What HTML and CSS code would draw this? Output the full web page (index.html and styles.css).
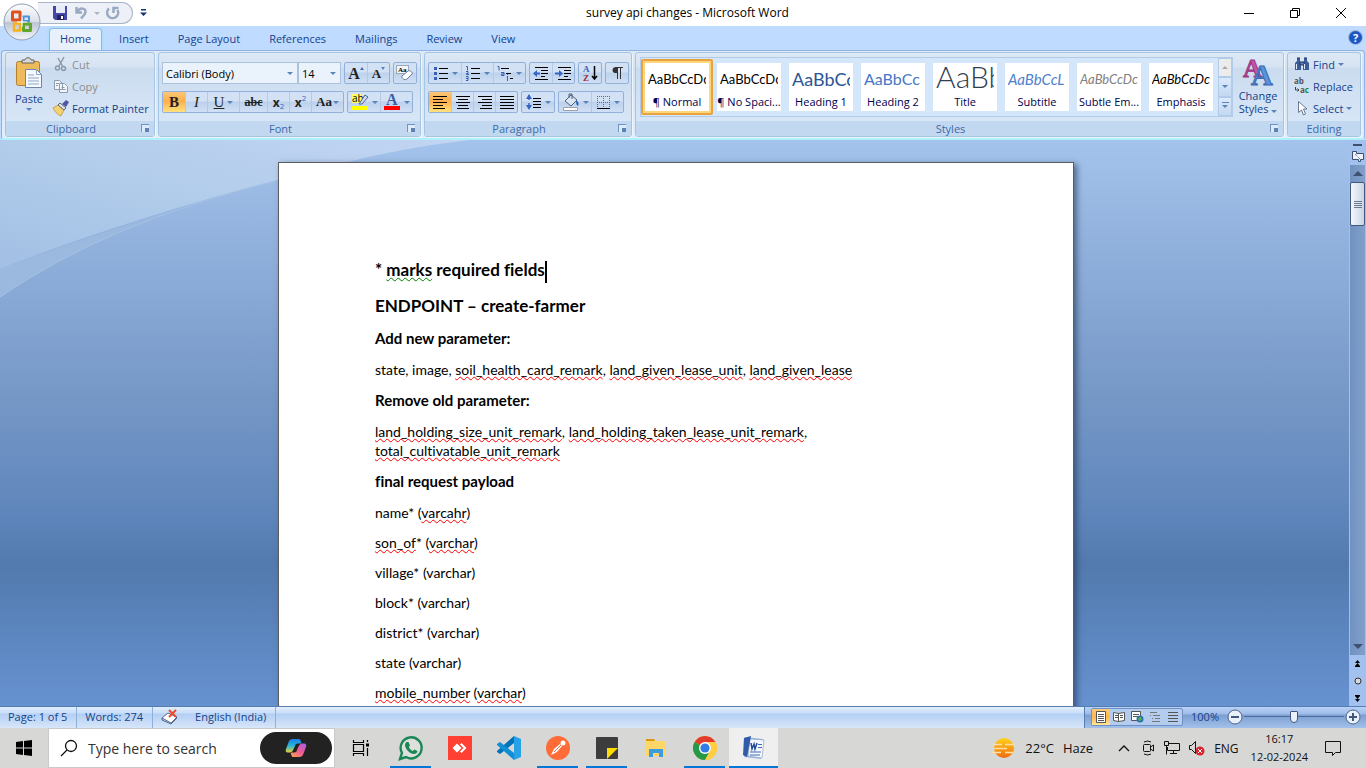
FILE: index.html
```html
<!DOCTYPE html>
<html lang="en">
<head>
    <meta charset="UTF-8">
    <title>survey api changes - Microsoft Word</title>
    <link rel="stylesheet" href="styles.css">
</head>
<body>
<header class="titlebar">
    <button class="office-btn" aria-label="Office Button">
        <svg width="38" height="38" viewBox="0 0 38 38">
            <defs>
                <linearGradient id="orb" x1="0" y1="0" x2="0" y2="1">
                    <stop offset="0" stop-color="#fdfdfe"/><stop offset=".48" stop-color="#dce1ea"/>
                    <stop offset=".52" stop-color="#bcc5d4"/><stop offset="1" stop-color="#f4f7fa"/>
                </linearGradient>
            </defs>
            <circle cx="19" cy="19" r="18" fill="url(#orb)" stroke="#8f9db3"/>
            <g fill="none" stroke-width="3" stroke-linejoin="round">
                <path d="M17 17H9.500V9H17z" stroke="#e2501a"/>
                <path d="M20.500 17.500v-4H26v4.500h-5.500z" stroke="#4d94dc" stroke-width="2"/>
                <path d="M17 20.500v7h-6v-7z" stroke="#f5b21a" stroke-width="2.500"/>
                <path d="M20.500 21h7v6.500h-7z" stroke="#62a52c"/>
            </g>
            <path d="M14 19h10M19 14v10" stroke="#fff" stroke-width="1"/>
        </svg>
    </button>
    <div class="quick-access">
        <button aria-label="Save">
            <svg width="16" height="16" viewBox="0 0 16 16"><path d="M1 1h14v14H3l-2-2z" fill="#4646a8"/><path d="M4 1h9v7H4z" fill="#e6ecfa"/><path d="M5 10h7v5H5z" fill="#23235e"/><path d="M9 11h2v3H9z" fill="#fff"/></svg>
        </button>
        <button aria-label="Undo">
            <svg width="16" height="16" viewBox="0 0 16 16"><path d="M3.500 2v5.500H9M4 7c3-5 9-4 8.500 0-.5 3-2 4-4.500 6.500" fill="none" stroke="#9aa9c2" stroke-width="2.500"/></svg>
        </button>
        <i class="arrow grey"></i>
        <button aria-label="Repeat">
            <svg width="16" height="16" viewBox="0 0 16 16"><path d="M4 3.500A5.500 5.500 0 1 0 12.500 5M8.500 8V3h5" fill="none" stroke="#9aa9c2" stroke-width="2.500"/></svg>
        </button>
    </div>
    <button class="customize" aria-label="Customize Quick Access Toolbar">
        <svg width="7" height="8" viewBox="0 0 7 8"><path d="M1 0h5v1.500H1zM0 3.500h7L3.500 7z" fill="#15327c"/></svg>
    </button>
    <h1>survey api changes - Microsoft Word</h1>
    <div class="window-controls">
        <button aria-label="Minimize"><svg width="12" height="12"><path d="M1 6.500h10" stroke="#000"/></svg></button>
        <button aria-label="Restore"><svg width="12" height="12"><path d="M1.500 3.500h7v7h-7zM3.500 3V1.500h7v7H9" fill="none" stroke="#000"/></svg></button>
        <button aria-label="Close"><svg width="12" height="12"><path d="M1 1l10 10M11 1L1 11" stroke="#000"/></svg></button>
    </div>
</header>

<nav class="tabs">
    <a class="active" href="#">Home</a>
    <a href="#">Insert</a>
    <a href="#">Page Layout</a>
    <a href="#">References</a>
    <a href="#">Mailings</a>
    <a href="#">Review</a>
    <a href="#">View</a>
    <button class="help" aria-label="Help">?</button>
</nav>

<section class="ribbon">
    <div class="group clipboard">
        <div class="group-body">
            <button class="big-btn">
                <svg width="28" height="32" viewBox="0 0 28 32">
                    <rect x="1.500" y="4.500" width="23" height="24" rx="2" fill="#edba5c" stroke="#b57f2e"/>
                    <path d="M7 6V3h3c0-3 6-3 6 0h3v3z" fill="#d9d9d9" stroke="#69655d"/>
                    <path d="M10.500 12.500h11l5 5v13h-16z" fill="#f6f9fe" stroke="#6d85ab"/>
                    <path d="M21.500 12.500v5h5M13 18h6m-6 3h11m-11 3h11m-11 3h11" fill="none" stroke="#8fa5c8"/>
                </svg>
                <span>Paste</span>
                <i class="arrow"></i>
            </button>
            <div class="stack">
                <button class="disabled">
                    <svg width="16" height="16" viewBox="0 0 16 16" fill="none" stroke="#8d98a8" stroke-width="1.500"><path d="M5 2l5 9M11 1L6 10"/><circle cx="4.500" cy="12" r="2"/><circle cx="10.500" cy="12.500" r="2"/></svg>
                    Cut
                </button>
                <button class="disabled">
                    <svg width="16" height="16" viewBox="0 0 16 16" fill="#f1f4f9" stroke="#8e9cb2"><path d="M1.500 2.500h5l3 3v6h-8zM6.500 5.500h5l3 3v6h-8z"/><path d="M8.500 9.500h3m-3 2h4M3 5.500h3m-3 2h2"/></svg>
                    Copy
                </button>
                <button>
                    <svg width="16" height="16" viewBox="0 0 16 16"><path d="M0 8l5-3 6 5-3 6c-3-1-6-4-8-8z" fill="#f4d272" stroke="#b78c32" stroke-width=".7"/><path d="M5 5l2-2 6 5-2 2z" fill="#dfe3eb" stroke="#5b6577"/><path d="M9 4l4-4 3 2-3 5z" fill="#5554a4"/></svg>
                    Format Painter
                </button>
            </div>
        </div>
        <div class="group-name with-launcher">Clipboard <button class="launcher" aria-label="Clipboard options"></button></div>
    </div>

    <div class="group font">
        <div class="group-body rows">
            <div class="row">
                <div class="combos">
                    <label class="combo font-name"><select aria-label="Font"><option>Calibri (Body)</option></select><i class="arrow"></i></label>
                    <label class="combo font-size"><select aria-label="Font size"><option>14</option></select><i class="arrow"></i></label>
                </div>
                <div class="btn-set">
                    <button class="serif grow" aria-label="Grow font">A<i class="up"></i></button>
                    <button class="serif shrink" aria-label="Shrink font">A<i class="arrow"></i></button>
                </div>
                <div class="btn-set">
                    <button aria-label="Clear formatting">
                        <svg width="18" height="18" viewBox="0 0 18 18"><rect x=".5" y="1.500" width="12" height="8" fill="#f4f6fb" stroke="#9aa6ba"/><text x="2" y="8" class="tiny">Aa</text><path d="M6 12l6-5c2-1 5 1 4 3l-5 5c-2 2-6-1-5-3z" fill="#fff" stroke="#6c7890"/></svg>
                    </button>
                </div>
            </div>
            <div class="row">
                <div class="btn-set">
                    <button class="serif pressed"><b>B</b></button>
                    <button class="serif"><em>I</em></button>
                    <button class="serif wide"><u>U</u><i class="arrow"></i></button>
                    <button class="serif small"><s>abc</s></button>
                    <button class="script" aria-label="Subscript"><b>x</b><sub>2</sub></button>
                    <button class="script" aria-label="Superscript"><b>x</b><sup>2</sup></button>
                    <button class="serif case">Aa<i class="arrow"></i></button>
                </div>
                <div class="btn-set">
                    <button class="wide" aria-label="Highlight colour">
                        <svg width="18" height="18" viewBox="0 0 18 18"><path d="M1 1h9v9H1z" fill="#ff6"/><text x="1" y="9" class="ab">ab</text><path d="M8 11l6-9 3 2-6 7z" fill="#cfdcf1" stroke="#4c6191"/><path d="M1 13h16v4H1z" fill="#ff0"/></svg>
                        <i class="arrow"></i>
                    </button>
                    <button class="wide" aria-label="Font colour">
                        <svg width="18" height="18" viewBox="0 0 18 18"><text x="3" y="12" class="colour-a">A</text><path d="M1 13h16v4H1z" fill="#f00"/></svg>
                        <i class="arrow"></i>
                    </button>
                </div>
            </div>
        </div>
        <div class="group-name with-launcher">Font <button class="launcher" aria-label="Font options"></button></div>
    </div>

    <div class="group paragraph">
        <div class="group-body rows">
            <div class="row">
                <div class="btn-set">
                    <button class="wide" aria-label="Bullets"><svg width="16" height="16"><path d="M6 3.500h9M6 8.500h9M6 13.500h9" stroke="#000"/><path d="M1 2h3v3H1zM1 7h3v3H1zM1 12h3v3H1z" fill="#3b5fb5"/></svg><i class="arrow"></i></button>
                    <button class="wide" aria-label="Numbering"><svg width="16" height="16"><path d="M6 3.500h9M6 8.500h9M6 13.500h9" stroke="#000"/><path d="M1 1.500h1.500v4M1 6.500h2v2H1.500v1H4M1 11.500h2v4H1m0-2h2" stroke="#3b5fb5" fill="none"/></svg><i class="arrow"></i></button>
                    <button class="wide" aria-label="Multilevel list"><svg width="16" height="16"><path d="M4 3.500h8M9 8.500h5M13 13.500h3" stroke="#000"/><path d="M.5 1.500H2v4M4 7.500h3v3H4.500V9H7M10.500 11v5m0-7v1" stroke="#3b5fb5" fill="none"/></svg><i class="arrow"></i></button>
                </div>
                <div class="btn-set">
                    <button aria-label="Decrease indent"><svg width="18" height="16"><path d="M3 2.500h13M9 5.500h7M9 8.500h7M9 11.500h4M3 14.500h13" stroke="#000"/><path d="M8 8.500H3" stroke="#3565c4" stroke-width="2"/><path d="M5 5v7L1 8.500z" fill="#3565c4"/></svg></button>
                    <button aria-label="Increase indent"><svg width="18" height="16"><path d="M3 2.500h13M9 5.500h7M9 8.500h7M9 11.500h4M3 14.500h13" stroke="#000"/><path d="M0 8.500h5" stroke="#3565c4" stroke-width="2"/><path d="M4 5v7l4-3.500z" fill="#3565c4"/></svg></button>
                </div>
                <div class="btn-set">
                    <button aria-label="Sort"><svg width="18" height="18"><text x="2" y="8" class="sort-a">A</text><text x="2" y="17" class="sort-z">Z</text><path d="M13.500 2v13M11 12l2.500 3 2.500-3" fill="none" stroke="#000" stroke-width="1.500"/></svg></button>
                </div>
                <div class="btn-set">
                    <button aria-label="Show paragraph marks"><svg width="16" height="16"><path d="M7 2.500h7M8.500 2v12M11.500 2v12" stroke="#333"/><path d="M8 2C2 1 2 9 8 8z" fill="#333"/></svg></button>
                </div>
            </div>
            <div class="row">
                <div class="btn-set">
                    <button class="pressed" aria-label="Align left"><svg width="16" height="16"><path d="M1 2.500h14M1 5.500h10M1 8.500h14M1 11.500h10M1 14.500h12" stroke="#000"/></svg></button>
                    <button aria-label="Centre"><svg width="16" height="16"><path d="M1 2.500h14M3 5.500h10M1 8.500h14M3 11.500h10M2 14.500h12" stroke="#000"/></svg></button>
                    <button aria-label="Align right"><svg width="16" height="16"><path d="M1 2.500h14M5 5.500h10M1 8.500h14M5 11.500h10M3 14.500h12" stroke="#000"/></svg></button>
                    <button aria-label="Justify"><svg width="16" height="16"><path d="M1 2.500h14M1 5.500h14M1 8.500h14M1 11.500h14M1 14.500h14" stroke="#000"/></svg></button>
                </div>
                <div class="btn-set">
                    <button class="wide" aria-label="Line spacing"><svg width="16" height="16"><path d="M7 4.500h8M7 7.500h8M7 10.500h8M7 13.500h8" stroke="#000"/><path d="M3 1v14" stroke="#3565c4" stroke-width="1.500" stroke-dasharray="5 3"/><path d="M0 5l3-5 3 5zM0 11l3 5 3-5z" fill="#3565c4"/></svg><i class="arrow"></i></button>
                </div>
                <div class="btn-set">
                    <button class="wide" aria-label="Shading"><svg width="18" height="18"><path d="M3 8l6-6 6 5-6 6z" fill="#dce5f3" stroke="#4b5d7e"/><path d="M7 5V1h3v5" fill="none" stroke="#4b5d7e"/><path d="M14 7c3 2 3 4 2 6-2-1-2-3-2-6z" fill="#2f62bb"/><path d="M1.500 14.500h14v3h-14z" fill="#fff" stroke="#a0a0a0"/></svg><i class="arrow"></i></button>
                    <button class="wide" aria-label="Borders"><svg width="16" height="16"><path d="M2.500 2v12M8.500 2v12M14.500 2v12M2 2.500h13M2 8.500h13" stroke="#5a6c8c" stroke-dasharray="1 1"/><path d="M2 14.500h13" stroke="#000"/></svg><i class="arrow"></i></button>
                </div>
            </div>
        </div>
        <div class="group-name with-launcher">Paragraph <button class="launcher" aria-label="Paragraph options"></button></div>
    </div>

    <div class="group styles">
        <div class="group-body">
            <div class="gallery">
                <div class="gallery-items">
                    <button class="style-item selected"><span class="sample">AaBbCcDc</span><span>¶ Normal</span></button>
                    <button class="style-item"><span class="sample">AaBbCcDc</span><span>¶ No Spaci...</span></button>
                    <button class="style-item"><span class="sample heading1">AaBbCc</span><span>Heading 1</span></button>
                    <button class="style-item"><span class="sample heading2">AaBbCc</span><span>Heading 2</span></button>
                    <button class="style-item"><span class="sample title">AaBb</span><span>Title</span></button>
                    <button class="style-item"><span class="sample subtitle">AaBbCcL</span><span>Subtitle</span></button>
                    <button class="style-item"><span class="sample subtle">AaBbCcDc</span><span>Subtle Em...</span></button>
                    <button class="style-item"><span class="sample emphasis">AaBbCcDc</span><span>Emphasis</span></button>
                </div>
                <div class="gallery-scroll">
                    <button class="off" aria-label="Previous styles"><i class="up"></i></button>
                    <button aria-label="Next styles"><i class="arrow"></i></button>
                    <button class="more" aria-label="More styles"><i class="arrow"></i></button>
                </div>
            </div>
            <button class="big-btn">
                <svg width="32" height="32" viewBox="0 0 32 32">
                    <text x="1" y="20" class="big-a pink">A</text>
                    <text x="9" y="28" class="big-a">A</text>
                </svg>
                <span>Change<br>Styles <i class="arrow"></i></span>
            </button>
        </div>
        <div class="group-name with-launcher">Styles <button class="launcher" aria-label="Styles options"></button></div>
    </div>

    <div class="group editing">
        <div class="group-body">
            <div class="stack">
                <button>
                    <svg width="16" height="16" viewBox="0 0 16 16"><path d="M3 2h3v3l1 2v7H1V7l2-2zM10 2h3v3l2 2v7H9V7l1-2z" fill="#3b5c96"/><path d="M6 6h4v3H6zM3 2h3m4 0h3" fill="#6584bb" stroke="#1f376b"/><path d="M2.500 8v5M10.500 8v5" stroke="#dfe9fa"/></svg>
                    Find <i class="arrow"></i>
                </button>
                <button>
                    <svg width="16" height="16" viewBox="0 0 16 16"><text x="0" y="6" class="rep">ab</text><text x="6" y="15" class="rep">a<tspan fill="#188a28">c</tspan></text><path d="M1.500 9v3H5M3.500 10.500L5 12l-1.500 1.500" fill="none" stroke="#345"/></svg>
                    Replace
                </button>
                <button>
                    <svg width="16" height="16" viewBox="0 0 16 16"><path d="M4.500 1.500v11l3-2.500 2 5 2-1-2-5h3.500z" fill="#fff" stroke="#6b7a94"/></svg>
                    Select <i class="arrow"></i>
                </button>
            </div>
        </div>
        <div class="group-name">Editing</div>
    </div>
</section>

<main class="workspace">
    <svg class="swoosh" width="470" height="170" viewBox="0 0 470 170">
        <defs>
            <linearGradient id="sky" x1="1" y1="0" x2="0" y2="1">
                <stop offset="0" stop-color="#c2d5f3"/><stop offset=".5" stop-color="#b2cdeb"/><stop offset="1" stop-color="#a2bfe4"/>
            </linearGradient>
        </defs>
        <path d="M0 157Q110 81 277 41Q120 84 0 129z" fill="#9bb9de"/>
        <path d="M0 0H470Q400 8 340 24Q150 70 0 129z" fill="url(#sky)"/>
        <path d="M0 157Q110 81 277 41" fill="none" stroke="#a6c1e4"/>
    </svg>
    <div class="canvas">
        <article class="page">
            <h2>* <span class="grammar">marks</span> required fields<span class="cursor"></span></h2>
            <h2>ENDPOINT – create-farmer</h2>
            <h3>Add new parameter:</h3>
            <p class="para">state, image, <span class="typo">soil_health_card_remark</span>, <span class="typo">land_given_lease_unit</span>, <span class="typo">land_given_lease</span></p>
            <h3>Remove old parameter:</h3>
            <p class="para"><span class="typo">land_holding_size_unit_remark</span>, <span class="typo">land_holding_taken_lease_unit_remark</span>, <span class="typo">total_cultivatable_unit_remark</span></p>
            <h3>final request payload</h3>
            <p>name* (<span class="typo">varcahr</span>)</p>
            <p><span class="typo">son_of</span>* (<span class="typo">varchar</span>)</p>
            <p>village* (varchar)</p>
            <p>block* (varchar)</p>
            <p>district* (varchar)</p>
            <p>state (varchar)</p>
            <p><span class="typo">mobile_number</span> (<span class="typo">varchar</span>)</p>
        </article>
    </div>
    <div class="scrollbar">
        <div class="split"></div>
        <button class="ruler" aria-label="View ruler"><svg width="12" height="12"><path d="M.5 1.500h4v2h7v6h-3v2h-2v-2h-6z" fill="#eef3fb" stroke="#3e4f70"/><path d="M3 4l5 5" stroke="#3e4f70" stroke-dasharray="1 1"/></svg></button>
        <button aria-label="Scroll up"><i class="up"></i></button>
        <div class="track"><div class="thumb"></div></div>
        <button aria-label="Scroll down"><i class="arrow"></i></button>
        <button class="browse" aria-label="Previous page"><svg width="7" height="8"><path d="M3.500 0L6 3H1zM3.500 3L6 6H1zM1 6h5v1H1z" fill="#000"/></svg></button>
        <button class="browse" aria-label="Select browse object"><svg width="8" height="8"><circle cx="4" cy="4" r="3" fill="#d8d8d8" stroke="#333"/></svg></button>
        <button class="browse" aria-label="Next page"><svg width="7" height="8"><path d="M1 1h5v1H1zM3.500 5L6 2H1zM3.500 8L6 5H1z" fill="#000"/></svg></button>
    </div>
</main>

<footer class="statusbar">
    <button>Page: 1 of 5</button>
    <button>Words: 274</button>
    <button class="proof" aria-label="Proofing errors">
        <svg width="18" height="16" viewBox="0 0 18 16"><path d="M1 9l6-5 9 4-6 6z" fill="#fff" stroke="#53698f"/><path d="M1 9v2l9 4 6-6" fill="none" stroke="#53698f"/><path d="M8 1l7 7M15 1L8 8" stroke="#f1492c" stroke-width="2"/></svg>
    </button>
    <button class="language">English (India)</button>
    <div class="status-right">
        <div class="views">
            <button class="on" aria-label="Print layout"><svg width="12" height="12"><path d="M1.500.5h9v11h-9z" fill="#fff" stroke="#555"/><path d="M3 3.500h6M3 5.500h6M3 7.500h6M3 9.500h6" stroke="#555"/></svg></button>
            <button aria-label="Full screen reading"><svg width="12" height="12"><path d="M.5 1.500l5 1 6-1v8l-6 1-5-1z" fill="#fff" stroke="#555"/><path d="M5.500 2v9M2 4.500h3M2 6.500h3M7 4.500h3M7 6.500h3" stroke="#555"/></svg></button>
            <button aria-label="Web layout"><svg width="13" height="12"><path d="M.5.5h9v9h-9z" fill="#fff" stroke="#555"/><path d="M2 3.500h6M2 5.500h6" stroke="#555"/><circle cx="9" cy="8" r="3.500" fill="#2874a8"/><path d="M7 7l3-1 1 3-3 1z" fill="#5aae52"/></svg></button>
            <button aria-label="Outline"><svg width="12" height="12"><path d="M1 1.500h7M4 4.500h7M6 7.500h5M3 10.500h8M1 4.500h1M3 7.500h1" stroke="#777"/></svg></button>
            <button aria-label="Draft"><svg width="12" height="12"><path d="M1 1.500h10M1 4.500h10M1 7.500h10M1 10.500h10" stroke="#555"/></svg></button>
        </div>
        <button class="percent">100%</button>
        <button class="round" aria-label="Zoom out"><svg width="16" height="16"><circle cx="8" cy="8" r="7" fill="#e9f0fa" stroke="#4b648d"/><path d="M4 8h8" stroke="#42577d" stroke-width="2"/></svg></button>
        <input type="range" min="0" max="100" value="50" aria-label="Zoom">
        <button class="round" aria-label="Zoom in"><svg width="16" height="16"><circle cx="8" cy="8" r="7" fill="#e9f0fa" stroke="#4b648d"/><path d="M4 8h8M8 4v8" stroke="#42577d" stroke-width="2"/></svg></button>
    </div>
</footer>

<div class="taskbar">
    <button class="start" aria-label="Start"><svg width="16" height="16"><path d="M0 2l7-1v6.500H0zM8 1l8-1v7.500H8zM0 8.500h7V15l-7-1zM8 8.500h8V16l-8-1z"/></svg></button>
    <div class="search">
        <svg width="18" height="18" viewBox="0 0 18 18"><circle cx="11" cy="7" r="5.500" fill="none" stroke="#111" stroke-width="1.300"/><path d="M7 11l-6 6" stroke="#111" stroke-width="1.300"/></svg>
        <input type="text" placeholder="Type here to search" aria-label="Search">
        <button class="copilot" aria-label="Copilot">
            <svg width="22" height="20" viewBox="0 0 24 22">
                <defs>
                    <linearGradient id="cp1" x1="0" y1="0" x2="0" y2="1"><stop offset="0" stop-color="#1a7ef0"/><stop offset=".5" stop-color="#28b4d6"/><stop offset="1" stop-color="#e8d333"/></linearGradient>
                    <linearGradient id="cp2" x1="1" y1="0" x2="0" y2="1"><stop offset="0" stop-color="#a25df2"/><stop offset=".5" stop-color="#ef5c92"/><stop offset="1" stop-color="#ffa84a"/></linearGradient>
                </defs>
                <path d="M8 1h7c2 0 2 2 3 5h-4c-2 0-3 1-3 3l-2 4c-1 2-2 3-4 3H3c-2 0-3-2-2-4L4 4c1-2 2-3 4-3z" fill="url(#cp1)"/>
                <path d="M16 21H9c-2 0-2-2-3-5h4c2 0 3-1 3-3l2-4c1-2 2-3 4-3h2c2 0 3 2 2 4l-3 8c-1 2-2 3-4 3z" fill="url(#cp2)"/>
                <path d="M11 9h3l-2 5H9z" fill="#222"/>
            </svg>
        </button>
    </div>
    <div class="apps">
        <button class="task-view" aria-label="Task View"><svg width="18" height="16"><path d="M1.500 4.500h10v7h-10zM1.500 0v2.500h10V0M1.500 16v-2.500h10V16M15.500 0v2M15.500 8v8" fill="none" stroke="#000" stroke-width="1.200"/><path d="M14 3.500h3v3h-3z"/></svg></button>
        <button class="running" aria-label="WhatsApp"><svg width="26" height="26" viewBox="0 0 26 26"><path d="M2 24l2-6A10.500 10.500 0 1 1 8 22z" fill="#fff" fill-opacity=".2" stroke="#1b8755" stroke-width="2.400"/><path d="M8.500 7h2l1.500 3.500-1.200 1.500c1 2 2 3 4 4l1.500-1.500 3.200 1.500c0 2-2 3-3.500 3-4 0-9-5-9-9 0-1 .5-2 1.500-3z" fill="#1b8755"/></svg></button>
        <button aria-label="AnyDesk"><svg width="24" height="24"><path d="M0 0h24v24H0z" fill="#ff4033"/><path d="M4.500 12L9 7.500l4.500 4.500L9 16.500z" fill="#fff"/><path d="M12 8.500l1.500-1.500 5 5-5 5L12 15.500l3.500-3.500z" fill="#fff"/></svg></button>
        <button aria-label="Visual Studio Code"><svg width="24" height="24" viewBox="0 0 24 24"><path d="M17 0v7L3 18l-3-2v-1z" fill="#0072b8"/><path d="M0 8l3-2 14 11v7L0 9z" fill="#118fd5"/><path d="M17 0l7 3v18l-7 3z" fill="#28a2e6"/></svg></button>
        <button class="running" aria-label="Postman"><svg width="24" height="24"><circle cx="12" cy="12" r="12" fill="#ff6c37"/><path d="M5 19l3-6 6-5 2 2-5 6z" fill="#fff"/><path d="M8 16l7-7" stroke="#e36b45"/><circle cx="17" cy="7" r="2.500" fill="#fff"/></svg></button>
        <button class="running" aria-label="Sticky Notes"><svg width="22" height="22"><rect width="22" height="22" rx="1" fill="#3d3d3d"/><path d="M11 11h11L11 22z" fill="#ffdc00"/></svg></button>
        <button aria-label="File Explorer"><svg width="22" height="20" viewBox="0 0 22 20"><path d="M1 1h8l2 2h10v15H1z" fill="#ffd667"/><path d="M1 1h8l1 2H1z" fill="#d99b0d"/><path d="M4 19v-8h14v8h-4v-4H8v4z" fill="#3c9cdd"/></svg></button>
        <button class="running" aria-label="Google Chrome"><svg width="24" height="24" viewBox="0 0 24 24"><circle cx="12" cy="12" r="12" fill="#ffcd40"/><path d="M12 12L1.600 6A12 12 0 0 1 22.400 6z" fill="#e33b2e"/><path d="M12 12L1.600 6A12 12 0 0 0 12 24l5.200-9z" fill="#279847"/><path d="M12 6h10.400A12 12 0 0 1 12 24l5-9z" fill="#ffcd40"/><circle cx="12" cy="12" r="6" fill="#fff"/><circle cx="12" cy="12" r="4.600" fill="#337be5"/></svg></button>
        <button class="running current" aria-label="Microsoft Word"><svg width="24" height="24" viewBox="0 0 24 24"><path d="M3 1l18 2-2 20-17-2z" fill="#9cb8e3"/><path d="M8 3l14 1-2 18-14-2z" fill="#f5f8fd" stroke="#8fa4c6" stroke-width=".7"/><path d="M2 2l7-2-4 21-4-2z" fill="#315ba9"/><path d="M9 7l1 6 2-5 1 5 2-6" fill="none" stroke="#234d99" stroke-width="1.500"/><path d="M16 8.500h4M16 11.500h4M8 16h11M8 19h10" stroke="#4268ad"/></svg></button>
    </div>
    <div class="tray">
        <button class="weather">
            <svg width="24" height="22" viewBox="0 0 24 22"><defs><linearGradient id="sun" x1="0" y1="0" x2="0" y2="1"><stop offset="0" stop-color="#ffd21c"/><stop offset="1" stop-color="#f06a0d"/></linearGradient></defs><circle cx="12" cy="11" r="10" fill="url(#sun)"/><path d="M1 7.500h9m3 0h10M2 11.500h13M0 15.500h9m4 0h8" stroke="#fbe1a8" stroke-width="1.500"/></svg>
            <span>22°C</span><span>Haze</span>
        </button>
        <button class="chevron" aria-label="Show hidden icons"><svg width="12" height="8"><path d="M1 7l5-5 5 5" fill="none" stroke="#111" stroke-width="1.300"/></svg></button>
        <button aria-label="Meet Now"><svg width="14" height="16" fill="none" stroke="#111"><rect x="1.500" y="4.500" width="7" height="7" rx="1"/><path d="M8.500 7l3-2v6l-3-2M2 2q4-2 7 0M2 14q4 2 7 0"/></svg></button>
        <button aria-label="Network"><svg width="16" height="14" fill="none" stroke="#111"><path d="M4 2.500h11.500v7H3.500V6M9.500 9.500v3M6 12.500h7M.5.500h4v4h-4zM2.500 4.500v9"/></svg></button>
        <button aria-label="Volume muted"><svg width="18" height="16"><path d="M1.500 5.500h2l4-4v12l-4-4h-2z" fill="none" stroke="#111"/><circle cx="12" cy="11" r="4.500" fill="#d9232e"/><path d="M10 9l4 4M14 9l-4 4" stroke="#fff"/></svg></button>
        <button>ENG</button>
        <button class="clock"><span>16:17</span><span>12-02-2024</span></button>
        <button class="notify" aria-label="Notifications"><svg width="18" height="18"><path d="M1.500 2.500h15v11h-5l-3 3v-3h-7z" fill="none" stroke="#111"/></svg></button>
    </div>
</div>
</body>
</html>
```
FILE: styles.css
```css
* {
    box-sizing: border-box;
}
body {
    margin: 0;
    height: 100vh;
    display: flex;
    flex-direction: column;
    overflow: hidden;
    font-family: "Open Sans", "Noto Sans", sans-serif;
    font-size: 11px;
    color: #15428b;
    background: #bfdbff;
}
button {
    display: inline-flex;
    align-items: center;
    justify-content: center;
    margin: 0;
    padding: 0;
    border: 0;
    background: none;
    font: inherit;
    color: inherit;
    white-space: nowrap;
}
svg {
    flex: none;
    overflow: visible;
}

/* small triangles */
.arrow, .up {
    display: inline-block;
    flex: none;
    border: 3px solid transparent;
    border-bottom: 0;
    border-top-color: #5b82bb;
}
.up {
    border: 3px solid transparent;
    border-top: 0;
    border-bottom-color: #4a6ca8;
}
.arrow.grey {
    border-top-color: #a9b3c3;
}

/* title bar */
.titlebar {
    display: flex;
    align-items: center;
    height: 26px;
    flex: none;
    background: #fff;
    position: relative;
}
.office-btn {
    position: absolute;
    left: 3px;
    top: 3px;
    z-index: 2;
}
.quick-access {
    display: flex;
    align-items: center;
    gap: 5px;
    height: 22px;
    margin-left: 38px;
    padding: 0 11px 0 14px;
    border: 1px solid #a9b4c6;
    border-left: 0;
    border-radius: 0 11px 11px 0;
    background: #edf1f7;
}
.customize {
    margin-left: 7px;
}
.titlebar h1 {
    flex: 1;
    margin: 0;
    text-align: center;
    font-size: 12px;
    line-height: 22px;
    font-weight: normal;
    color: #000;
}
.window-controls button {
    width: 42px;
    height: 26px;
}
.window-controls {
    display: flex;
    gap: 4px;
    padding-right: 4px;
}

/* tabs */
.tabs {
    display: flex;
    gap: 5px;
    height: 24px;
    flex: none;
    padding: 2px 4px 0 49px;
}
.tabs a {
    padding: 0 12px;
    line-height: 22px;
    text-decoration: none;
    color: #15428b;
}
.tabs a.active {
    padding: 0 10px;
    border: 1px solid #8fb8ea;
    border-bottom: 0;
    border-radius: 4px 4px 0 0;
    background: #e8f1fb;
    line-height: 20px;
    box-shadow: 0 0 3px #8fe3f5;
}
.help {
    width: 13px;
    height: 13px;
    margin: 3px 0 0 auto;
    border-radius: 50%;
    background: #1d57c4;
    box-shadow: 0 0 0 1px #9fb6dd;
    color: #fff;
    font-weight: bold;
}

/* ribbon */
.ribbon {
    display: flex;
    gap: 3px;
    height: 90px;
    flex: none;
    margin: 0 1px;
    padding: 1px 3px;
    border: 1px solid #8db2e3;
    border-bottom: 2px solid #aef0fb;
    border-radius: 4px;
    background: linear-gradient(#dfeaf6, #d3e1f1 18px, #e3eefb);
}
.group {
    display: flex;
    flex-direction: column;
    border: 1px solid #a6c5e2;
    border-radius: 3px;
    background: linear-gradient(#dde8f5, #d6e3f2 14px, #cbdcf0 15px, #dbe9f8);
    box-shadow: 1px 1px 0 #ecf4fc;
    overflow: hidden;
}
.group-body {
    display: flex;
    flex: 1;
    padding: 0 4px;
}
.group-name {
    position: relative;
    flex: none;
    height: 15px;
    background: #c1d8f0;
    color: #3e6aaa;
    text-align: center;
    line-height: 15px;
}
.with-launcher {
    padding-right: 18px;
}
.launcher {
    position: absolute;
    right: 5px;
    top: 3px;
    width: 8px;
    height: 8px;
    border: solid #6f93c3;
    border-width: 1px 0 0 1px;
    background: linear-gradient(#5f82b2, #5f82b2) right bottom / 4px 4px no-repeat, #dceafa;
}
.big-btn {
    flex-direction: column;
    justify-content: flex-start;
    padding-top: 4px;
    line-height: 13px;
}
.clipboard {
    width: 150px;
}
.clipboard .big-btn {
    width: 38px;
    gap: 3px;
}
.stack {
    display: flex;
    flex-direction: column;
    align-items: flex-start;
    padding: 0 0 1px 5px;
}
.stack button {
    height: 22px;
    gap: 3px;
}
.disabled {
    color: #8d8d8d;
}
.font {
    width: 263px;
}
.paragraph {
    width: 208px;
}
.rows {
    flex-direction: column;
    gap: 7px;
    padding: 9px 3px 0;
}
.row {
    display: flex;
    gap: 3px;
}
.combos {
    display: flex;
}
.combo {
    position: relative;
    display: flex;
}
.combo select {
    appearance: none;
    width: 100%;
    height: 22px;
    padding: 0 3px;
    border: 1px solid #abc1de;
    border-radius: 0;
    background: #eaf2fb;
    font: inherit;
    color: #000;
}
.combo .arrow {
    position: absolute;
    right: 5px;
    top: 10px;
}
.font-name {
    width: 136px;
}
.font-size {
    width: 43px;
}
.btn-set {
    display: flex;
    height: 22px;
    border: 1px solid #93b0d8;
    border-radius: 2px;
    background: linear-gradient(#d3e1f4 9px, #bcd1ec 10px, #d0e0f5);
}
.btn-set button {
    width: 22px;
    gap: 3px;
    border-left: 1px solid #b3c9e6;
}
.btn-set button:first-child {
    border-left: 0;
}
.btn-set .wide {
    width: 32px;
}
.btn-set .pressed {
    background: linear-gradient(#fbc778, #fdae4b 9px, #ffe17e);
}
.serif {
    font-family: "Liberation Serif", serif;
    font-size: 15px;
    color: #222;
}
.grow {
    font-size: 16px;
    font-weight: bold;
}
.shrink {
    font-size: 13px;
    font-weight: bold;
}
.btn-set .grow, .btn-set .shrink {
    align-items: flex-start;
    gap: 0;
    line-height: 22px;
}
.grow .up, .shrink .arrow {
    margin-top: 4px;
    border-left-width: 2px;
    border-right-width: 2px;
}
.btn-set .small {
    width: 28px;
    font-size: 12px;
    font-weight: bold;
}
.btn-set .case {
    width: 32px;
    gap: 1px;
    font-size: 13px;
    font-weight: bold;
}
.script {
    color: #222;
    font-size: 12px;
}
.btn-set .script {
    gap: 0;
}
.script sub, .script sup {
    color: #3565c4;
    font-size: 8px;
    line-height: 12px;
}
.script sub {
    align-self: flex-end;
}
.script sup {
    align-self: flex-start;
}
svg text {
    font-family: "Liberation Serif", serif;
    font-weight: bold;
}
.tiny {
    font-size: 7px;
}
svg .ab, svg .rep {
    font-family: "Open Sans", sans-serif;
    font-size: 10px;
    font-weight: normal;
}
svg .rep {
    font-size: 8px;
    font-weight: bold;
    fill: #555;
}
.colour-a {
    font-size: 16px;
    fill: #3a5fa4;
}
.sort-a, .sort-z {
    font-size: 9px;
    fill: #3a5fb4;
}
.sort-z {
    fill: #a02c2c;
}
.big-a {
    font-size: 30px;
    fill: #5b93dc;
    stroke: #3a68b0;
    stroke-width: 1px;
}
.big-a.pink {
    font-size: 26px;
    fill: #c455a8;
    stroke: #993583;
}

/* styles gallery */
.styles {
    flex: 1;
    min-width: 0;
}
.styles .group-body {
    padding-right: 0;
}
.styles .big-btn {
    width: 50px;
}
.gallery {
    display: flex;
    flex: 1;
    min-width: 0;
    height: 60px;
    margin-top: 4px;
    border: 1px solid #b2cbe9;
    background: #d4e6f9;
}
.gallery-items {
    display: flex;
    flex: 1;
    overflow: hidden;
}
.style-item {
    flex: none;
    flex-direction: column;
    width: 72px;
    height: 56px;
    margin-top: 1px;
    padding: 4px;
    color: #000050;
}
.style-item span {
    width: 64px;
    height: 17px;
    overflow: hidden;
    background: #fff;
    line-height: 15px;
}
/* the white border keeps a long sample clear of the right edge */
.style-item .sample {
    height: 31px;
    border: solid #fff;
    border-width: 0 3px;
    text-align: left;
    line-height: 32px;
    font-family: Lato, sans-serif;
    font-size: 13px;
    color: #000;
}
.selected {
    padding: 2px;
    border: 2px solid #e8a33c;
    border-radius: 2px;
    background: #ffd67b;
}
.style-item .heading1 {
    font-size: 18px;
    color: #2c5596;
}
.style-item .heading2 {
    font-size: 16px;
    color: #4677c8;
}
.style-item .title {
    font-size: 30px;
    font-weight: 300;
    line-height: 26px;
    color: #323e4f;
}
.style-item .subtitle {
    font-size: 15px;
    font-style: italic;
    color: #4f81cd;
}
.style-item .subtle {
    font-style: italic;
    color: #808080;
}
.style-item .emphasis {
    font-style: italic;
}
.gallery-scroll {
    display: flex;
    flex-direction: column;
    width: 14px;
}
.gallery-scroll button {
    flex: 1;
    border: 1px solid #b2cbe9;
    background: linear-gradient(#dbe9fa, #c3d8f2);
}
.gallery-scroll .off {
    background: #ececec;
}
.off .up {
    border-bottom-color: #aaa;
}
.gallery-scroll .more .arrow {
    position: relative;
}
.more .arrow::before {
    content: "";
    position: absolute;
    left: -3px;
    top: -6px;
    width: 7px;
    height: 1px;
    background: #5b82bb;
}
.editing {
    width: 74px;
}
.editing .stack {
    padding-left: 2px;
}

/* document area */
.workspace {
    position: relative;
    display: flex;
    flex: 1;
    min-height: 0;
    background: linear-gradient(#a4c3ec, #7597c6 46%, #5e85bb 67%, #527aae 75%, #6692d0);
}
.swoosh {
    position: absolute;
    left: 0;
    top: 0;
}
.canvas {
    position: relative;
    flex: 1;
    padding: 22px 0 0 3px;
    overflow: hidden;
}
.page {
    width: 796px;
    min-height: 1000px;
    margin: 0 auto;
    padding: 94px 96px;
    border: 1px solid #5d5d5d;
    background: #fff;
    box-shadow: 3px 2px 6px rgba(30,50,80,0.6);
    font-family: Lato, sans-serif;
    font-size: 14px;
    line-height: 19px;
    font-variant-ligatures: none;
    color: #000;
}
.page h2 {
    height: 24px;
    margin: 0 0 12px;
    font-size: 17px;
    line-height: 26px;
}
.page h3 {
    margin: 0 0 12px;
    font-size: 15px;
}
.page p {
    margin: 0 0 11px;
}
.page .para {
    margin-bottom: 12px;
}
.typo, .grammar {
    text-decoration: underline wavy #f00 1px;
    text-decoration-skip-ink: none;
    text-underline-offset: 1px;
}
.grammar {
    text-decoration-color: #008000;
}
.cursor {
    display: inline-block;
    width: 2px;
    height: 22px;
    background: #000;
    vertical-align: middle;
}
.scrollbar {
    position: relative;
    display: flex;
    flex-direction: column;
    align-items: center;
    width: 17px;
    background: #a3c1ee;
}
.split {
    width: 9px;
    height: 2px;
    margin: 4px 0 1px;
    background: #3e4f70;
}
.scrollbar button {
    width: 15px;
    height: 17px;
}
.scrollbar .ruler {
    height: 18px;
}
.scrollbar .up {
    border: 5px solid transparent;
    border-top: 0;
    border-bottom-color: #3f5070;
}
.scrollbar .arrow {
    border: 5px solid transparent;
    border-bottom: 0;
    border-top-color: #3f5070;
}
.scrollbar button:not(.browse):not(.ruler), .track {
    background: linear-gradient(90deg, #7092c1, #829fca);
}
.track {
    flex: 1;
    width: 15px;
}
.thumb {
    height: 44px;
    border: 1px solid #43597f;
    border-radius: 2px;
    background:
        repeating-linear-gradient(#6c7a92 0 1px, transparent 1px 2px) center / 8px 7px no-repeat,
        linear-gradient(90deg, #f4f7fc, #c9d4e5);
}

/* status bar */
.statusbar {
    display: flex;
    height: 22px;
    flex: none;
    border-top: 1px solid #567db0;
    background: linear-gradient(#e2eefd, #c9def9 6px, #b3cff4 7px, #d7e6f9);
}
.statusbar > button {
    padding: 0 9px 2px 8px;
    border-right: 1px solid #8fb0dc;
}
.statusbar > .proof {
    padding-right: 8px;
    border: 0;
}
.status-right {
    display: flex;
    align-items: center;
    margin-left: auto;
    padding: 0 5px 2px 6px;
    border-left: 1px solid #567db0;
    background: linear-gradient(#b9d3f7, #9ebbe8 7px, #7c9fd0 8px, #a2c0ea);
}
.views {
    display: flex;
    height: 18px;
    border: 1px solid #6e90c4;
    border-radius: 2px;
    background: #b4cdee;
}
.views button {
    width: 18px;
}
.views .on {
    background: linear-gradient(#fccb7b, #ffb648, #ffe89c);
}
.percent {
    margin: 0 8px;
}
.status-right input {
    appearance: none;
    width: 100px;
    height: 16px;
    margin: 0 1px;
    background: linear-gradient(#4e6b9b, #4e6b9b) center / 100% 1px no-repeat;
}
.status-right input::-webkit-slider-thumb {
    appearance: none;
    width: 8px;
    height: 12px;
    border: 1px solid #41577e;
    border-radius: 1px 1px 4px 4px;
    background: #e9f0fa;
}

/* taskbar */
.taskbar {
    display: flex;
    height: 40px;
    flex: none;
    background: #d7d7d6;
    color: #111;
    font-size: 12px;
}
.start {
    width: 48px;
}
.search {
    display: flex;
    align-items: center;
    width: 287px;
    padding: 0 2px 0 11px;
    border: 1px solid #c9c9c9;
    background: #fff;
}
.search input {
    flex: 1;
    min-width: 0;
    padding: 0 10px;
    border: 0;
    background: none;
    font-family: inherit;
    font-size: 14px;
}
.search input::placeholder {
    color: #333;
}
.copilot {
    width: 72px;
    height: 32px;
    border-radius: 16px;
    background: #222;
}
.apps {
    display: flex;
}
.apps button {
    width: 49px;
    position: relative;
}
.apps .task-view {
    width: 51px;
}
.apps .running::after {
    content: "";
    position: absolute;
    left: 4px;
    right: 4px;
    bottom: 0;
    height: 2px;
    background: #0577d7;
}
.apps .current {
    background: #efefef;
}
.apps .current::after {
    left: 0;
    right: 0;
}
.tray {
    display: flex;
    gap: 8px;
    margin-left: auto;
}
.weather {
    gap: 9px;
    margin-right: 17px;
    font-size: 13px;
}
.chevron {
    padding-right: 4px;
}
.clock {
    flex-direction: column;
    margin-left: 4px;
    font-size: 11px;
    line-height: 18px;
}
.notify {
    margin: 0 24px 0 8px;
}
```
